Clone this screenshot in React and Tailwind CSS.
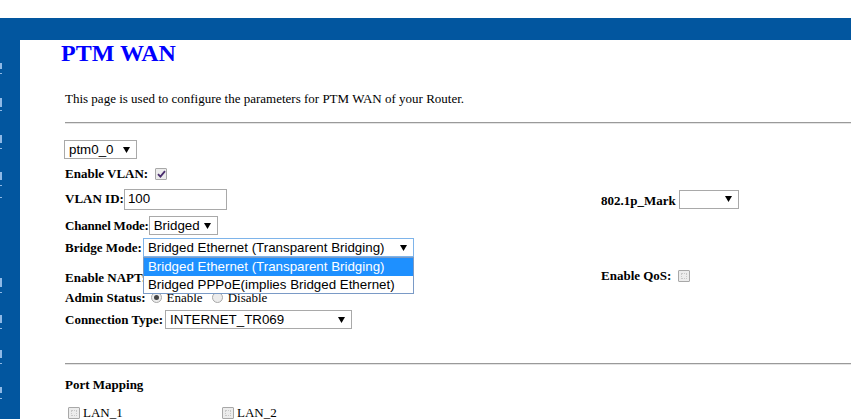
const serif = "font-['Liberation_Serif',serif]"
const sans = "font-['Liberation_Sans',Arial,sans-serif]"

// marks of the collapsed menu peeking out at the left edge of the sidebar
const menuMarks = [
  { mt: 'mt-[23px]', h: 'h-[6px]' },
  { mt: 'mt-[4px]', h: 'h-[1px]' },
  { mt: 'mt-[24px]', h: 'h-[9px]' },
  { mt: 'mt-[3px]', h: 'h-[1px]' },
  { mt: 'mt-[24px]', h: 'h-[8px]' },
  { mt: 'mt-[5px]', h: 'h-[1px]' },
  { mt: 'mt-[23px]', h: 'h-[8px]' },
  { mt: 'mt-[5px]', h: 'h-[1px]' },
  { mt: 'mt-[11px]', h: 'h-[1px]' },
  { mt: 'mt-[80px]', h: 'h-[9px]' },
  { mt: 'mt-[5px]', h: 'h-[1px]' },
  { mt: 'mt-[22px]', h: 'h-[8px]' },
  { mt: 'mt-[5px]', h: 'h-[1px]' },
  { mt: 'mt-[21px]', h: 'h-[8px]' },
  { mt: 'mt-[5px]', h: 'h-[1px]' },
  { mt: 'mt-[23px]', h: 'h-[6px]' },
  { mt: 'mt-[5px]', h: 'h-[1px]' },
]

function Arrow() {
  return (
    <svg width="7" height="6" viewBox="0 0 7 6" className="shrink-0">
      <polygon points="0,0 7,0 3.5,6" fill="#000" />
    </svg>
  )
}

function Select({ value, className = '', focused = false }) {
  return (
    <div
      className={`flex h-[19px] shrink-0 items-center justify-between bg-white pl-[4px] pr-[6px] text-[13.33px] leading-none text-black ${sans} border ${
        focused ? 'border-[#7eb4ea]' : 'border-[#a9a9a9]'
      } ${className}`}
    >
      <span className="whitespace-nowrap">{value}</span>
      <Arrow />
    </div>
  )
}

function Checkbox({ checked = false }) {
  return (
    <span className="inline-flex h-[12px] w-[12px] shrink-0 items-center justify-center rounded-[1px] border border-[#a8a8a8] bg-[#ececec]">
      {checked ? (
        <svg width="9" height="8" viewBox="0 0 9 8">
          <path d="M1 4.2 L3.4 6.6 L8 1.2" stroke="#4a2d6e" strokeWidth="1.8" fill="none" />
        </svg>
      ) : (
        <span className="h-[6px] w-[6px] border border-dotted border-[#c8c8c8]" />
      )}
    </span>
  )
}

function Radio({ checked = false }) {
  return (
    <span className="inline-flex h-[11px] w-[11px] shrink-0 items-center justify-center rounded-full border border-[#a8a8a8] bg-[#ececec]">
      {checked && <span className="h-[5px] w-[5px] rounded-full bg-[#444]" />}
    </span>
  )
}

function Label({ children, className = '' }) {
  return (
    <span className={`shrink-0 whitespace-nowrap text-[13px] font-bold text-black ${serif} ${className}`}>{children}</span>
  )
}

function Rule({ className = '' }) {
  return <div className={`h-[2px] border-t border-b border-t-[#9a9a9a] border-b-[#e4e4e4] ${className}`} />
}

export default function App() {
  return (
    <div className="flex min-h-screen flex-col bg-white">
      <div className="h-[18px] shrink-0" />
      <div className="h-[22px] shrink-0 bg-[#02569f]" />
      <div className="flex flex-1">
        <aside className="flex w-[20px] shrink-0 flex-col bg-[#02569f]">
          {menuMarks.map((m, i) => (
            <span key={i} className={`w-[2px] bg-[#8fb9e6] ${m.mt} ${m.h}`} />
          ))}
        </aside>

        <main className="flex-1 pl-[41px]">
          <h1 className={`mt-[1px] h-[24px] text-[24px] font-bold leading-[24px] text-[#0000ff] ${serif}`}>PTM WAN</h1>

          <div className="pl-[4px]">
            <p className={`mt-[26px] h-[16px] text-[13px] leading-[16px] text-black ${serif}`}>
              This page is used to configure the parameters for PTM WAN of your Router.
            </p>

            <Rule className="mt-[15px]" />

            <div className="mt-[16px] flex h-[19px] items-center">
              <Select value="ptm0_0" className="-ml-[1px] w-[73px]" />
            </div>

            <div className="mt-[5px] flex h-[20px] items-center gap-[7px]">
              <Label>Enable VLAN:</Label>
              <Checkbox checked />
            </div>

            <div className="mt-[3px] grid h-[21px] grid-cols-[536px_auto] items-center">
              <div className="flex items-center">
                <Label>VLAN ID:</Label>
                <div className={`flex h-[21px] w-[103px] items-center border border-[#a9a9a9] pl-[3px] text-[13.33px] ${sans}`}>100</div>
              </div>
              <div className="flex items-center">
                <div className="w-[78px] shrink-0">
                  <Label>802.1p_Mark</Label>
                </div>
                <Select value="" className="w-[60px]" />
              </div>
            </div>

            <div className="mt-[8px] flex h-[19px] items-center">
              <Label className="tracking-[-0.2px]">Channel Mode:</Label>
              <Select value="Bridged" className="w-[69px]" />
            </div>

            <div className="relative z-10 mt-[3px] flex h-[19px] items-center gap-[1px]">
              <Label>Bridge Mode:</Label>
              <div className="relative">
                <Select value="Bridged Ethernet (Transparent Bridging)" className="w-[271px]" focused />
                <ul className={`absolute left-0 top-full w-[271px] border border-[#7a9ac6] bg-white text-[13.33px] leading-none ${sans}`}>
                  <li className="flex h-[18px] items-center bg-[#1e90ff] pl-[4px] text-white">Bridged Ethernet (Transparent Bridging)</li>
                  <li className="flex h-[17px] items-center pl-[4px] text-black">Bridged PPPoE(implies Bridged Ethernet)</li>
                </ul>
              </div>
            </div>

            <div className="mt-[7px] grid h-[20px] grid-cols-[536px_auto] items-center">
              <div>
                <Label>Enable NAPT:</Label>
              </div>
              <div className="flex items-center gap-[7px]">
                <Label>Enable QoS:</Label>
                <Checkbox />
              </div>
            </div>

            <div className={`mt-[4px] flex h-[19px] items-center text-[13px] text-black ${serif}`}>
              <Label>Admin Status:</Label>
              <span className="ml-[5px] flex"><Radio checked /></span>
              <span className="ml-[5px]">Enable</span>
              <span className="ml-[9px] flex"><Radio /></span>
              <span className="ml-[5px]">Disable</span>
            </div>

            <div className="mt-[3px] flex h-[19px] items-center gap-[2px]">
              <Label>Connection Type:</Label>
              <Select value="INTERNET_TR069" className="w-[187px]" />
            </div>

            <Rule className="mt-[34px]" />

            <div className="mt-[10px] flex h-[20px] items-center">
              <Label>Port Mapping</Label>
            </div>

            <div className={`mt-[11px] flex h-[13px] items-center text-[13px] text-black ${serif}`}>
              <div className="flex w-[154px] items-center gap-[3px] pl-[3px]">
                <Checkbox />
                <span>LAN_1</span>
              </div>
              <div className="flex items-center gap-[3px] pl-[3px]">
                <Checkbox />
                <span>LAN_2</span>
              </div>
            </div>
            <div className="h-[20px]" />
          </div>
        </main>
      </div>
    </div>
  )
}
